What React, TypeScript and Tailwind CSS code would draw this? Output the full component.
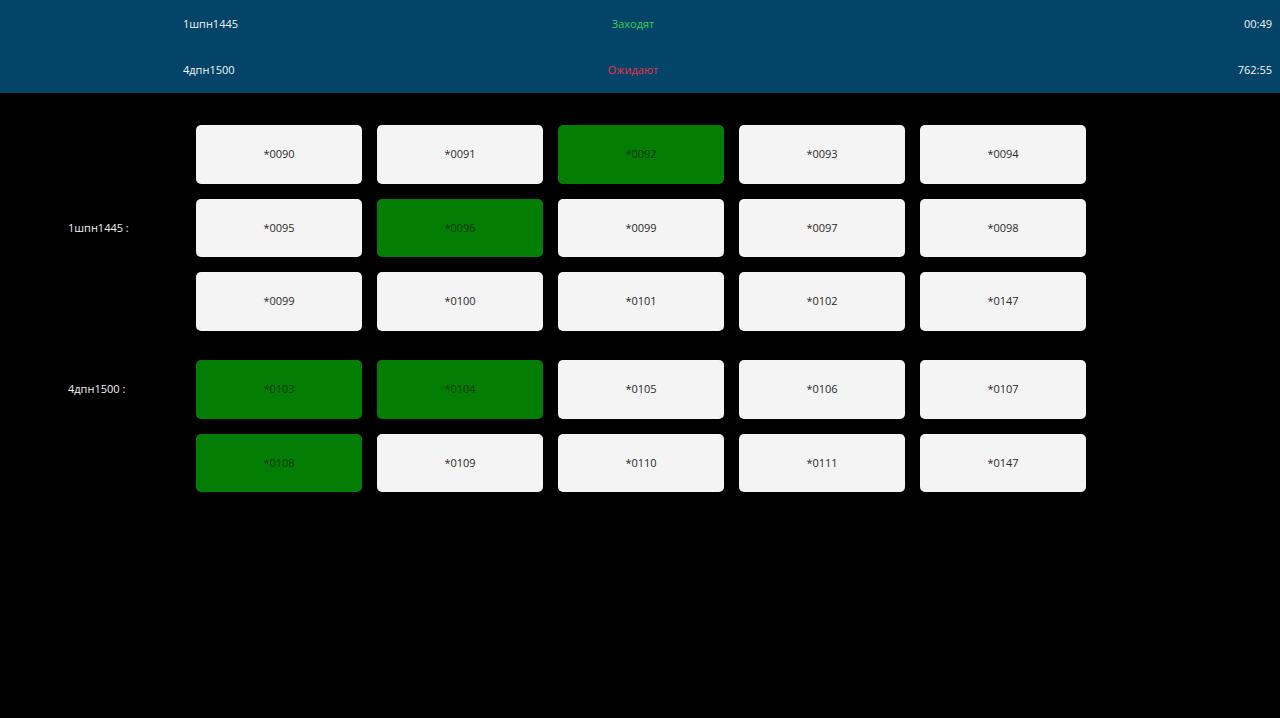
const font = { fontFamily: '"Open Sans", "Noto Sans", sans-serif' }

type Cell = { code: string; on?: boolean }

const groups: { name: string; align: 'center' | 'top'; rows: Cell[][] }[] = [
  {
    name: '1шпн1445 :',
    align: 'center',
    rows: [
      [{ code: '*0090' }, { code: '*0091' }, { code: '*0092', on: true }, { code: '*0093' }, { code: '*0094' }],
      [{ code: '*0095' }, { code: '*0096', on: true }, { code: '*0099' }, { code: '*0097' }, { code: '*0098' }],
      [{ code: '*0099' }, { code: '*0100' }, { code: '*0101' }, { code: '*0102' }, { code: '*0147' }],
    ],
  },
  {
    name: '4дпн1500 :',
    align: 'top',
    rows: [
      [{ code: '*0103', on: true }, { code: '*0104', on: true }, { code: '*0105' }, { code: '*0106' }, { code: '*0107' }],
      [{ code: '*0108', on: true }, { code: '*0109' }, { code: '*0110' }, { code: '*0111' }, { code: '*0147' }],
    ],
  },
]

function HeaderRow({ name, status, ok, time }: any) {
  return (
    <div className="flex items-center h-[46px] pt-[2px] text-[11px] text-[#f2f6f8]">
      <div className="w-[483px] pl-[183px]">{name}</div>
      <div className={'w-[300px] text-center ' + (ok ? 'text-[#2ed158]' : 'text-[#e8334a]')}>{status}</div>
      <div className="flex-1 text-right pr-[8px]">{time}</div>
    </div>
  )
}

function Card({ code, on }: Cell) {
  return (
    <div
      className={
        'w-[166px] h-[58.5px] rounded-[5px] flex items-center justify-center text-[11px] ' +
        (on ? 'bg-[#037d03] text-[#0b3a0b]' : 'bg-[#f4f4f4] text-[#2a2a2a]')
      }
    >
      {code}
    </div>
  )
}

export default function App() {
  return (
    <div className="w-[1280px] h-[718px] bg-black overflow-hidden" style={font}>
      <div className="bg-[#034468] h-[93px]">
        <HeaderRow name="1шпн1445" status="Заходят" ok time="00:49" />
        <HeaderRow name="4дпн1500" status="Ожидают" time="762:55" />
      </div>

      <div className="flex flex-col gap-[29.5px] pt-[32px]">
        {groups.map((g) => (
          <div key={g.name} className="flex">
            <div
              className={
                'w-[196px] pl-[68px] text-[11px] text-[#f2f2f2] ' +
                (g.align === 'center' ? 'self-center' : 'h-[58px] flex items-center')
              }
            >
              {g.name}
            </div>
            <div className="flex flex-col gap-[15px]">
              {g.rows.map((row, i) => (
                <div key={i} className="flex gap-[15px]">
                  {row.map((c, j) => (
                    <Card key={j} {...c} />
                  ))}
                </div>
              ))}
            </div>
          </div>
        ))}
      </div>
    </div>
  )
}
